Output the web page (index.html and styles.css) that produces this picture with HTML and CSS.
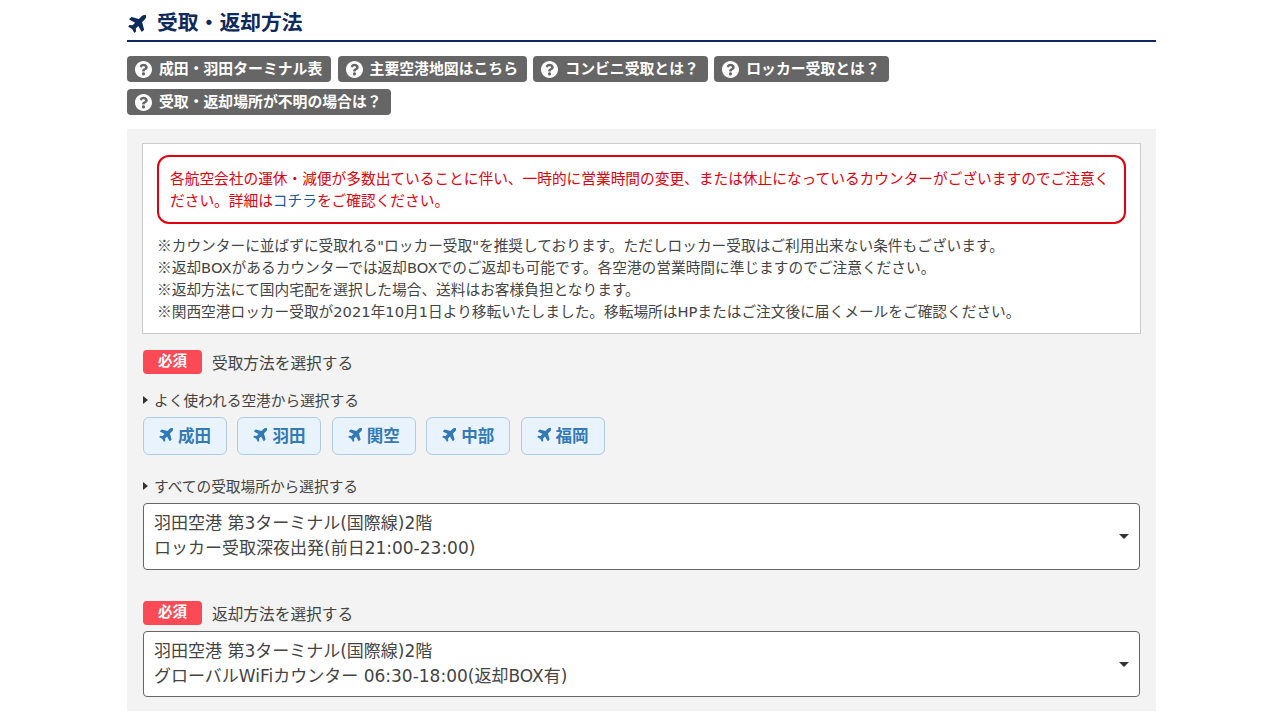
FILE: index.html
```html
<!DOCTYPE html>
<html lang="ja">
<head>
    <meta charset="UTF-8">
    <title>受取・返却方法</title>
    <link rel="stylesheet" href="styles.css">
</head>
<body>
    <svg class="icon-defs" xmlns="http://www.w3.org/2000/svg">
        <symbol id="plane" viewBox="-8 44 504 508">
            <path transform="rotate(-45 288 256)" d="M480 192H365.71L260.61 8.06A16.014 16.014 0 0 0 246.71 0h-65.5c-10.63 0-18.3 10.17-15.38 20.39L214.86 192H112l-43.2-57.6c-3.02-4.03-7.77-6.4-12.8-6.4H16.01C5.6 128-2.04 137.78.49 147.88L32 256 .49 364.12C-2.04 374.22 5.6 384 16.01 384H56c5.04 0 9.78-2.37 12.8-6.4L112 320h102.86l-49.03 171.6c-2.92 10.22 4.75 20.4 15.38 20.4h65.5c5.74 0 11.04-3.08 13.89-8.06L365.71 320H480c35.35 0 96-28.65 96-64s-60.65-64-96-64z"/>
        </symbol>
        <symbol id="question" viewBox="8 8 496 496">
            <path d="M504 256c0 136.997-111.043 248-248 248S8 392.997 8 256C8 119.083 119.043 8 256 8s248 111.083 248 248zM262.655 90c-54.497 0-89.255 22.957-116.549 63.758-3.536 5.286-2.353 12.415 2.715 16.258l34.699 26.31c5.205 3.947 12.621 3.008 16.665-2.122 17.864-22.658 30.113-35.797 57.303-35.797 20.429 0 45.698 13.148 45.698 32.958 0 14.976-12.363 22.667-32.534 33.976C247.128 238.528 216 254.941 216 296v4c0 6.627 5.373 12 12 12h56c6.627 0 12-5.373 12-12v-1.333c0-28.462 83.186-29.647 83.186-106.667 0-58.002-60.165-102-116.531-102zM256 338c-25.365 0-46 20.635-46 46 0 25.364 20.635 46 46 46s46-20.636 46-46c0-25.365-20.635-46-46-46z"/>
        </symbol>
    </svg>

    <div class="container">
        <h2 class="section-title">
            <svg class="title-icon"><use href="#plane"></use></svg>
            受取・返却方法
        </h2>

        <div class="help-links">
            <a class="help-btn" href="#"><svg class="help-icon"><use href="#question"></use></svg>成田・羽田ターミナル表</a>
            <a class="help-btn" href="#"><svg class="help-icon"><use href="#question"></use></svg>主要空港地図はこちら</a>
            <a class="help-btn" href="#"><svg class="help-icon"><use href="#question"></use></svg>コンビニ受取とは？</a>
            <a class="help-btn" href="#"><svg class="help-icon"><use href="#question"></use></svg>ロッカー受取とは？</a>
            <a class="help-btn" href="#"><svg class="help-icon"><use href="#question"></use></svg>受取・返却場所が不明の場合は？</a>
        </div>

        <section class="panel">
            <div class="notice">
                <p class="alert">各航空会社の運休・減便が多数出ていることに伴い、一時的に営業時間の変更、または休止になっているカウンターがございますのでご注意ください。詳細は<a href="#">コチラ</a>をご確認ください。</p>
                <ul class="notes">
                    <li><span class="mark">※</span>カウンターに並ばずに受取れる"ロッカー受取"を推奨しております。ただしロッカー受取はご利用出来ない条件もございます。</li>
                    <li><span class="mark">※</span>返却BOXがあるカウンターでは返却BOXでのご返却も可能です。各空港の営業時間に準じますのでご注意ください。</li>
                    <li><span class="mark">※</span>返却方法にて国内宅配を選択した場合、送料はお客様負担となります。</li>
                    <li><span class="mark">※</span>関西空港ロッカー受取が2021年10月1日より移転いたしました。移転場所はHPまたはご注文後に届くメールをご確認ください。</li>
                </ul>
            </div>

            <div class="field-head">
                <span class="required">必須</span>
                <span class="field-label">受取方法を選択する</span>
            </div>

            <p class="sub-label">よく使われる空港から選択する</p>
            <div class="airports">
                <a class="airport-btn" href="#"><svg class="airport-icon"><use href="#plane"></use></svg>成田</a>
                <a class="airport-btn" href="#"><svg class="airport-icon"><use href="#plane"></use></svg>羽田</a>
                <a class="airport-btn" href="#"><svg class="airport-icon"><use href="#plane"></use></svg>関空</a>
                <a class="airport-btn" href="#"><svg class="airport-icon"><use href="#plane"></use></svg>中部</a>
                <a class="airport-btn" href="#"><svg class="airport-icon"><use href="#plane"></use></svg>福岡</a>
            </div>

            <p class="sub-label sub-label-all">すべての受取場所から選択する</p>
            <div class="select-box">
                <div>羽田空港 第3ターミナル(国際線)2階</div>
                <div>ロッカー受取深夜出発(前日21:00-23:00)</div>
            </div>

            <div class="field-head field-head-return">
                <span class="required">必須</span>
                <span class="field-label">返却方法を選択する</span>
            </div>
            <div class="select-box select-box-return">
                <div>羽田空港 第3ターミナル(国際線)2階</div>
                <div>グローバルWiFiカウンター 06:30-18:00(返却BOX有)</div>
            </div>
        </section>
    </div>
</body>
</html>
```

FILE: styles.css
```css
* {
    box-sizing: border-box;
    margin: 0;
    padding: 0;
}

body {
    font-family: "DejaVu Sans", "Noto Sans CJK JP", sans-serif;
    background: #fff;
    color: #444;
    overflow: hidden;
}

a {
    text-decoration: none;
}

.icon-defs {
    display: none;
}

.container {
    width: 1029px;
    margin-left: 127px;
    padding-top: 7px;
}

.section-title {
    display: flex;
    align-items: center;
    gap: 11px;
    height: 35px;
    padding-left: 1px;
    border-bottom: 2px solid #0e2a5c;
    color: #0e2a5c;
    font-size: 20.8px;
    font-weight: 700;
    line-height: 33px;
}

.title-icon {
    width: 18px;
    height: 18px;
    fill: #0e2a5c;
}

.help-links {
    display: flex;
    flex-wrap: wrap;
    gap: 7px 6.3px;
    max-width: 800px;
    padding: 14px 0;
}

.help-btn {
    display: flex;
    align-items: center;
    gap: 7px;
    height: 26px;
    padding: 0 9px 0 8px;
    background: #666;
    border-radius: 4px;
    color: #fff;
    font-size: 14.85px;
    font-weight: 700;
    line-height: 26px;
}

.help-icon {
    width: 17px;
    height: 17px;
    fill: #fff;
}

.panel {
    background: #f3f3f3;
    padding: 14px 16px;
}

.notice {
    height: 191px;
    margin: 0 -1px;
    padding: 11px 14px 10px;
    background: #fff;
    border: 1px solid #ccc;
}

.alert {
    border: 2px solid #e0000f;
    border-radius: 12px;
    padding: 11px 11px 10px;
    color: #e0000f;
    font-size: 14.7px;
    line-height: 22px;
}

.alert a {
    color: #1d5a9c;
}

.notes {
    list-style: none;
    margin-top: 11px;
    font-size: 14.7px;
    line-height: 22px;
}

.notes li {
    height: 22px;
}

.mark {
    font-family: "Noto Sans CJK JP", sans-serif;
    line-height: 1;
}

.field-head {
    display: flex;
    align-items: flex-start;
    gap: 10px;
    height: 24px;
    margin-top: 16px;
}

.required {
    width: 59px;
    height: 24px;
    background: #f94a55;
    border-radius: 4px;
    color: #fff;
    font-size: 14.5px;
    font-weight: 700;
    line-height: 23px;
    text-align: center;
}

.field-label {
    font-size: 15.7px;
    line-height: 28px;
}

.sub-label {
    position: relative;
    margin-top: 15px;
    padding-left: 11px;
    font-size: 14.7px;
    line-height: 24px;
}

/* 小さい三角 */
.sub-label::before {
    content: "";
    position: absolute;
    left: 0;
    top: 7px;
    border-left: 5px solid #333;
    border-top: 4.5px solid transparent;
    border-bottom: 4.5px solid transparent;
}

.sub-label-all {
    margin-top: 20px;
}

.airports {
    display: flex;
    gap: 10.4px;
    margin-top: 4px;
}

.airport-btn {
    display: flex;
    align-items: center;
    justify-content: center;
    gap: 5px;
    width: 84px;
    height: 38px;
    padding-bottom: 3px;
    background: #e8f3fd;
    border: 1px solid #aecce4;
    border-radius: 6px;
    color: #3379b5;
    font-size: 16.5px;
    font-weight: 700;
}

.airport-icon {
    width: 14px;
    height: 14px;
    fill: #3379b5;
}

.select-box {
    position: relative;
    height: 67px;
    margin-top: 4px;
    padding: 7px 40px 0 10px;
    background: #fff;
    border: 1px solid #666;
    border-radius: 4px;
    font-size: 17px;
    line-height: 25px;
}

.select-box::after {
    content: "";
    position: absolute;
    right: 10px;
    top: 29.5px;
    border-top: 5px solid #333;
    border-left: 5.5px solid transparent;
    border-right: 5.5px solid transparent;
}

.field-head-return {
    margin-top: 31px;
}

.select-box-return {
    height: 66px;
    margin-top: 6px;
}
```
